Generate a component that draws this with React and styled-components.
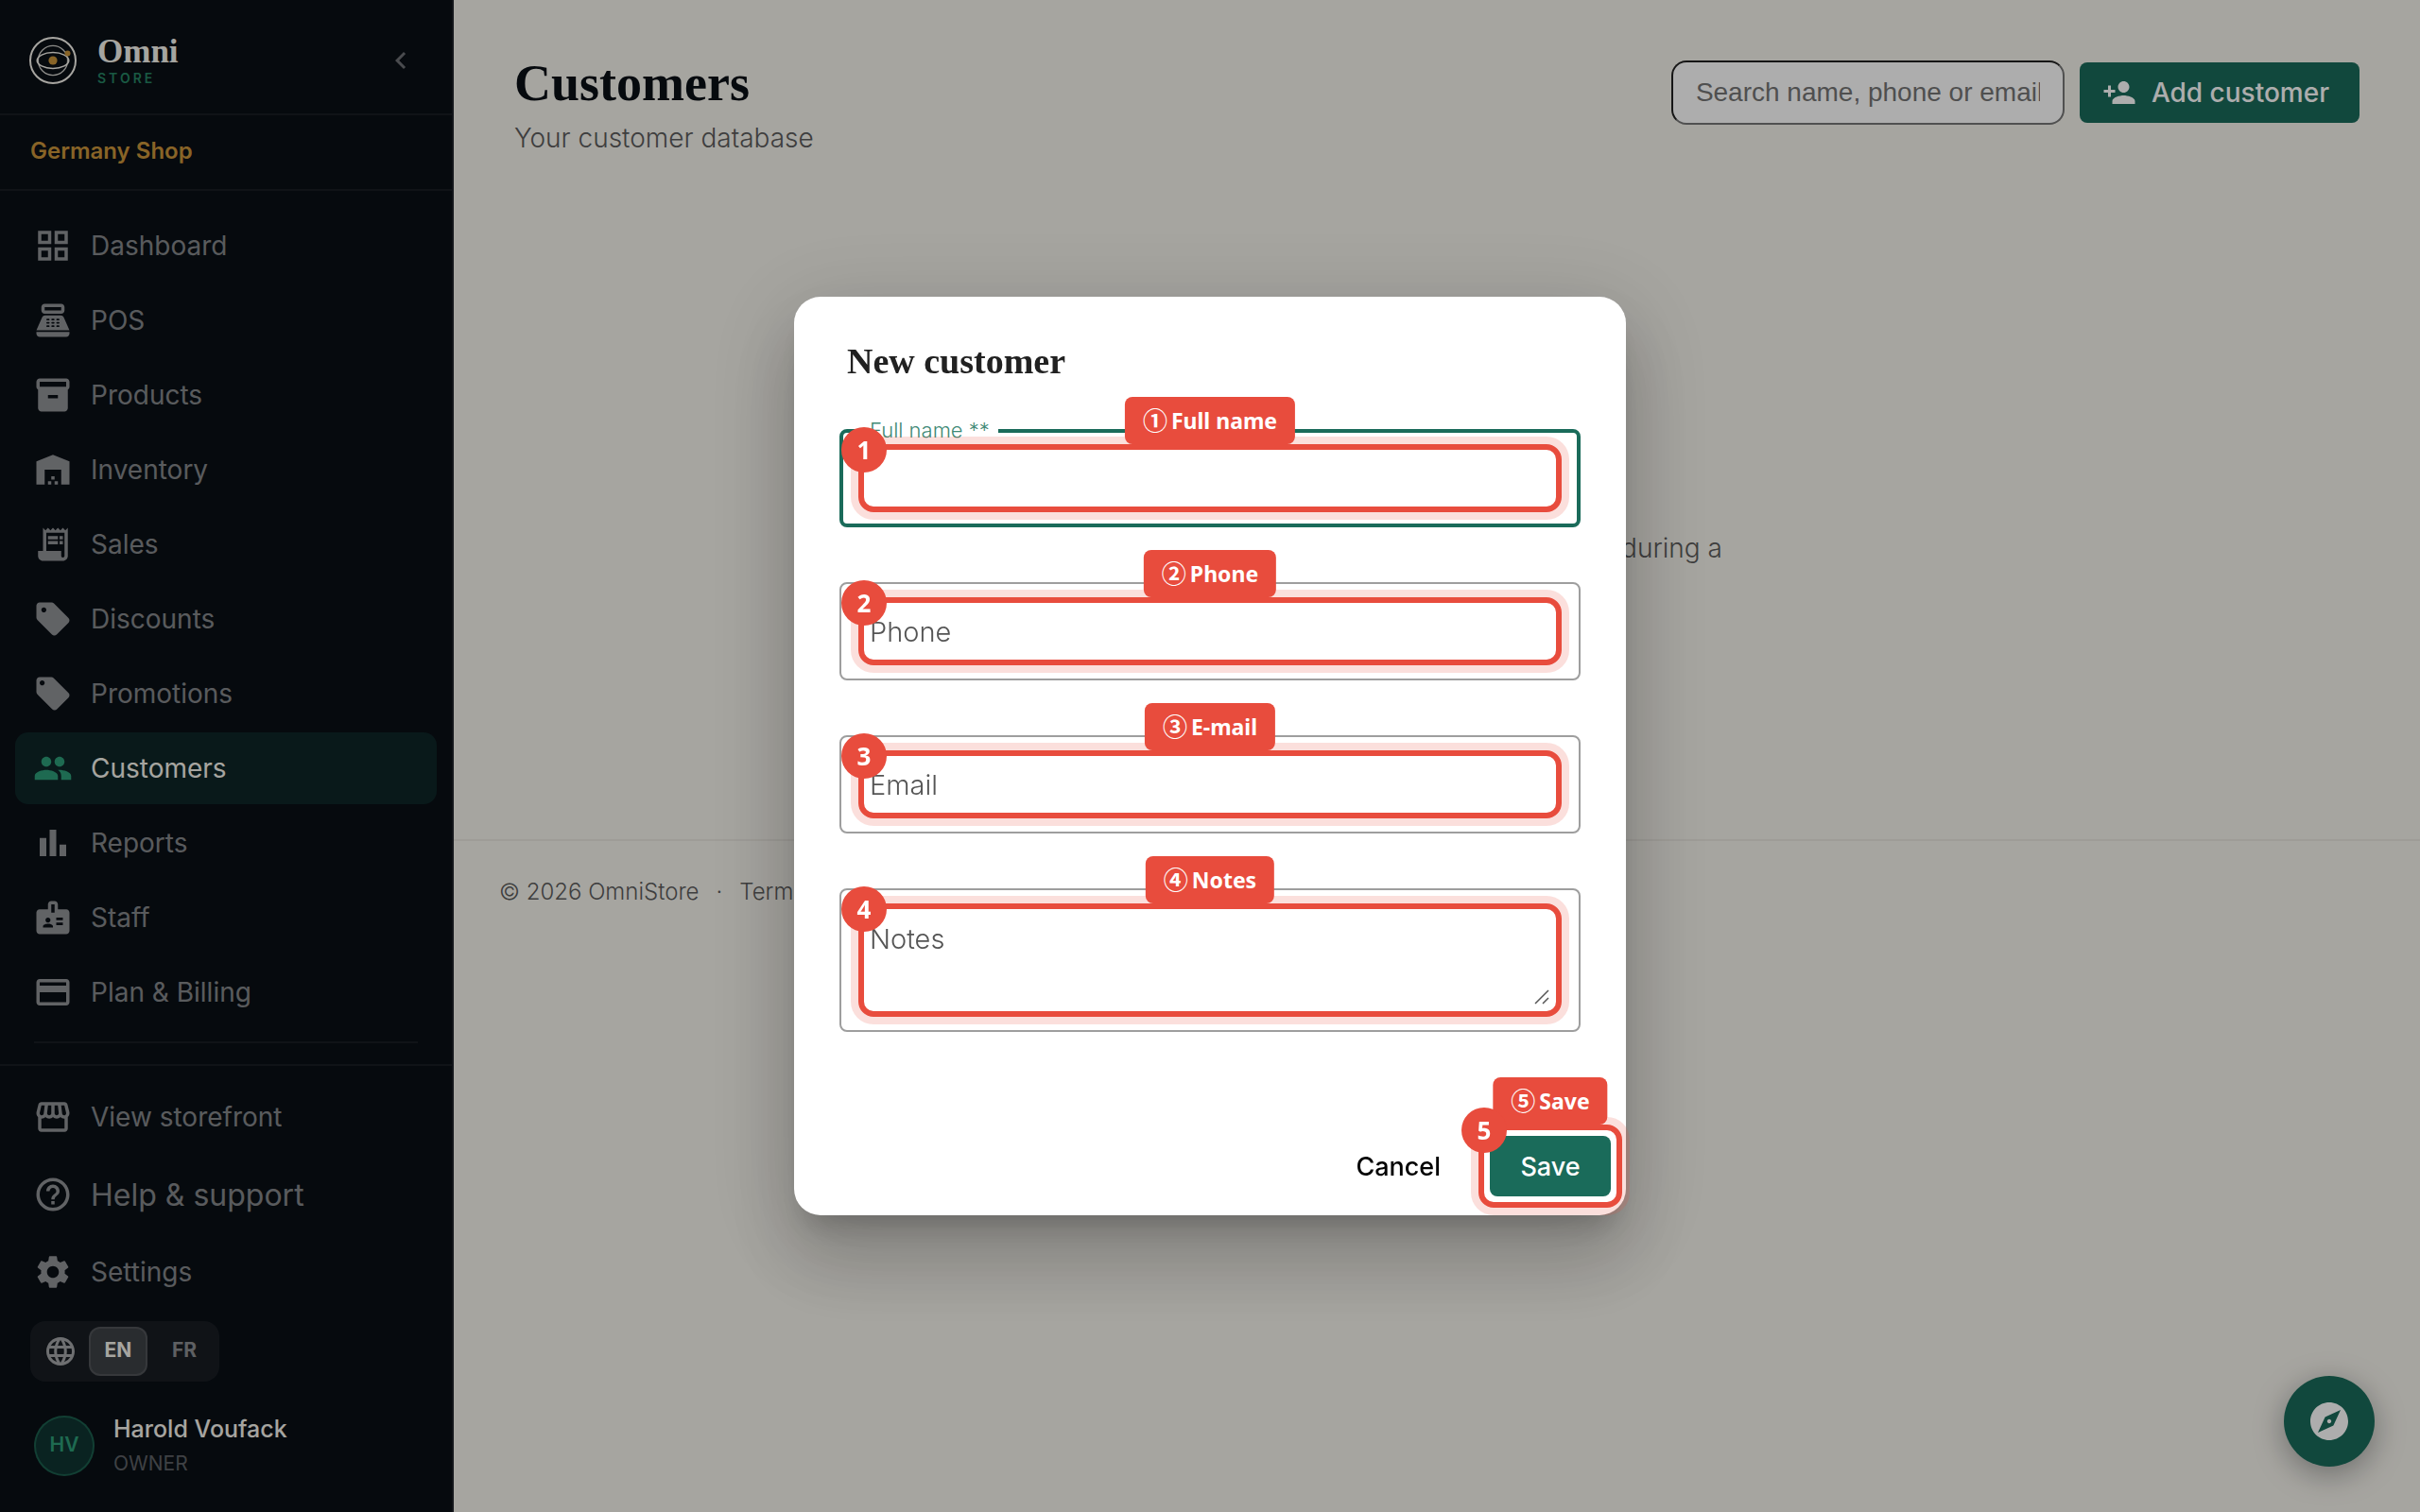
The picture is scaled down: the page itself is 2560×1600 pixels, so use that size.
import React, { useState } from "react";
import styled, { createGlobalStyle, css } from "styled-components";
import {
  MdOutlineGridView,
  MdPointOfSale,
  MdInventory2,
  MdWarehouse,
  MdReceiptLong,
  MdSell,
  MdLocalOffer,
  MdPeople,
  MdBarChart,
  MdBadge,
  MdOutlineCreditCard,
  MdOutlineStorefront,
  MdHelpOutline,
  MdSettings,
  MdLanguage,
  MdChevronLeft,
  MdPersonAdd,
  MdExplore,
} from "react-icons/md";

const sans = `Inter, "Open Sans", sans-serif`;
const serif = `"Liberation Serif", serif`;
const callout = `"Noto Sans", "Open Sans", "Noto Sans CJK JP", sans-serif`;

const color = {
  ink: "#0a0f16",
  ivory: "#f5f3ec",
  green: "#1a6b5a",
  mint: "#2d9d78",
  gold: "#c9943a",
  line: "rgba(255, 255, 255, 0.06)",
  muted: "rgba(255, 255, 255, 0.5)",
  grey: "#5c5c5c",
  red: "#e84c3d",
};

const GlobalStyle = createGlobalStyle`
  *, *::before, *::after { box-sizing: border-box; }
  body { margin: 0; background: ${color.ivory}; font-family: ${sans}; font-size: 28px; }
  button { font: inherit; border: 0; background: none; padding: 0; cursor: pointer; }
  a { color: inherit; text-decoration: none; }
  h1, h2, p { margin: 0; }
  svg { display: block; flex: none; }
`;

const Shell = styled.div`
  display: grid;
  grid-template-columns: 480px 1fr;
  min-height: 100vh;
`;

/* ---------- Sidebar ---------- */

const Sidebar = styled.aside`
  display: flex;
  flex-direction: column;
  height: 100vh;
  background: ${color.ink};
  border-right: 2px solid rgba(255, 255, 255, 0.08);
  color: ${color.muted};
`;

const Brand = styled.header`
  display: flex;
  align-items: center;
  gap: 21px;
  height: 122px;
  padding: 8px 36px 0 30px;
  border-bottom: 2px solid ${color.line};
`;

const BrandText = styled.div`
  flex: 1;
  padding-top: 2px;
`;

const BrandName = styled.div`
  font: 700 35px/36px ${serif};
  color: ${color.ivory};
`;

const BrandSub = styled.div`
  font-size: 14px;
  line-height: 20px;
  font-weight: 600;
  letter-spacing: 3px;
  color: #268464;
`;

const Collapse = styled.button`
  color: rgba(255, 255, 255, 0.4);
`;

const ShopName = styled.div`
  padding: 0 32px;
  font-size: 24px;
  font-weight: 600;
  line-height: 76px;
  height: 80px;
  color: ${color.gold};
  border-bottom: 2px solid ${color.line};
`;

const Nav = styled.nav`
  display: flex;
  flex-direction: column;
  gap: 3px;
  padding: 20px 16px 22px;
  border-bottom: 2px solid ${color.line};
`;

const NavRule = styled.hr`
  width: calc(100% - 40px);
  margin: 11px 20px 0;
  border: 0;
  border-top: 2px solid ${color.line};
`;

const NavItem = styled.a`
  display: flex;
  align-items: center;
  gap: 19px;
  height: 76px;
  padding: 0 19px;
  border-radius: 14px;
  font-size: ${(p) => (p.$large ? 32 : 28)}px;
  svg { color: rgba(255, 255, 255, 0.55); }
  ${(p) =>
    p.$active &&
    css`
      background: rgba(26, 107, 90, 0.25);
      color: ${color.ivory};
      svg { color: ${color.mint}; }
    `}
`;

const SideFooter = styled.div`
  display: flex;
  flex-direction: column;
  gap: 6px;
  padding: 16px 16px 0;
`;

const Languages = styled.div`
  display: flex;
  align-items: center;
  align-self: flex-start;
  gap: 12px;
  height: 64px;
  margin: 8px 16px 0;
  padding: 6px 6px 6px 14px;
  border-radius: 16px;
  background: rgba(255, 255, 255, 0.06);
  color: rgba(255, 255, 255, 0.6);
`;

const LanguageChoice = styled.div`
  display: flex;
  gap: 8px;
`;

const LanguageButton = styled.button`
  width: 62px;
  height: 52px;
  padding-bottom: 4px;
  border-radius: 12px;
  border: 2px solid ${(p) => (p.$on ? "rgba(255, 255, 255, 0.1)" : "transparent")};
  background: ${(p) => (p.$on ? "rgba(255, 255, 255, 0.16)" : "transparent")};
  color: ${(p) => (p.$on ? color.ivory : "rgba(255, 255, 255, 0.5)")};
  font-size: 21px;
  font-weight: 700;
`;

const User = styled.div`
  display: flex;
  align-items: center;
  gap: 20px;
  margin: 25px 20px 0;
`;

const Avatar = styled.div`
  display: grid;
  place-items: center;
  width: 64px;
  height: 64px;
  padding-bottom: 4px;
  border-radius: 50%;
  border: 2px solid rgba(45, 157, 120, 0.4);
  background: rgba(26, 107, 90, 0.4);
  color: ${color.mint};
  font-size: 21px;
  font-weight: 600;
`;

const UserName = styled.div`
  font-size: 25px;
  line-height: 38px;
  font-weight: 500;
  color: ${color.ivory};
`;

const UserRole = styled.div`
  font-size: 21px;
  line-height: 36px;
  color: rgba(255, 255, 255, 0.35);
`;

/* ---------- Main ---------- */

const Main = styled.main`
  display: flex;
  flex-direction: column;
`;

const PageHead = styled.header`
  display: flex;
  align-items: flex-start;
  justify-content: space-between;
  padding: 60px 64px 0;
`;

const Title = styled.h1`
  font: 700 54px/56px ${serif};
  color: ${color.ink};
`;

const Subtitle = styled.p`
  margin-top: 12px;
  line-height: 36px;
  color: ${color.grey};
  font-weight: 300;
`;

const Actions = styled.div`
  display: flex;
  align-items: center;
  gap: 16px;
  margin-top: 4px;
`;

const Search = styled.input`
  width: 416px;
  height: 68px;
  padding: 0 24px;
  border: 2px inset #767676;
  border-radius: 16px;
  background: #fff;
  font: 28px "Liberation Sans", sans-serif;
  &::placeholder { color: #757575; opacity: 1; }
`;

const Primary = styled.button`
  display: flex;
  align-items: center;
  justify-content: center;
  gap: 16px;
  height: 64px;
  min-width: 128px;
  padding: 0 ${(p) => (p.$icon ? 32 : 24)}px 0 24px;
  border-radius: 8px;
  background: ${color.green};
  color: #fff;
  font-size: ${(p) => (p.$icon ? 28 : 27)}px;
  font-weight: 500;
`;

const Empty = styled.section`
  display: flex;
  flex-direction: column;
  align-items: center;
  min-height: 724px;
  padding-top: 394px;
`;

const EmptyText = styled.p`
  max-width: 620px;
  text-align: center;
  line-height: 44px;
  color: ${color.grey};
  font-weight: 300;
`;

const Footer = styled.footer`
  display: flex;
  gap: 18px;
  padding: 36px 48px;
  border-top: 2px solid #e9e6df;
  font-size: 24px;
  line-height: 36px;
  font-weight: 300;
  color: ${color.grey};
`;

const Help = styled.button`
  position: fixed;
  right: 48px;
  bottom: 48px;
  display: grid;
  place-items: center;
  width: 96px;
  height: 96px;
  border-radius: 50%;
  background: ${color.green};
  color: #fff;
  box-shadow: 0 8px 32px rgba(10, 15, 20, 0.35);
`;

/* ---------- Dialog ---------- */

const Scrim = styled.div`
  position: fixed;
  inset: 0;
  display: grid;
  place-items: center;
  background: rgba(0, 0, 0, 0.32);
`;

const Dialog = styled.form`
  width: 880px;
  padding: 46px 16px 20px 48px;
  border-radius: 28px;
  background: #fff;
  box-shadow:
    0 22px 30px -14px rgba(0, 0, 0, 0.2),
    0 48px 76px 6px rgba(0, 0, 0, 0.14),
    0 18px 92px 16px rgba(0, 0, 0, 0.12);
`;

const DialogTitle = styled.h2`
  padding-left: 8px;
  font: 700 38px/44px ${serif};
  color: #212121;
`;

const Fields = styled.div`
  display: flex;
  flex-direction: column;
  gap: 58px;
  margin: 50px 32px 0 0;
`;

const Outline = styled.div`
  position: relative;
  padding: ${(p) => (p.$focused ? 24 : 26)}px ${(p) => (p.$focused ? 28 : 30)}px;
  border: ${(p) => (p.$focused ? `4px solid ${color.green}` : "2px solid #9e9e9e")};
  border-radius: 8px;
`;

const FloatingLabel = styled.label`
  position: absolute;
  top: -17px;
  left: 20px;
  padding: 0 9px 0 8px;
  background: #fff;
  color: #3f8a76;
  font-size: 22px;
  line-height: 28px;
  font-weight: 300;
`;

const HiddenLabel = styled.label`
  position: absolute;
  width: 1px;
  height: 1px;
  overflow: hidden;
  clip-path: inset(50%);
`;

const control = css`
  display: block;
  width: 100%;
  padding: 2px 0 0;
  border: 0;
  outline: 0;
  background: none;
  font: 300 29px/48px ${sans};
  color: #212121;
  &::placeholder { color: #555; opacity: 1; }
`;

const TextInput = styled.input`
  ${control}
  height: 48px;
`;

const TextArea = styled.textarea`
  ${control}
  height: 96px;
  resize: none;
`;

const Grip = styled.svg`
  position: absolute;
  right: 0;
  bottom: 0;
`;

const DialogActions = styled.div`
  display: flex;
  justify-content: flex-end;
  gap: 24px;
  margin-top: 110px;
`;

const Cancel = styled.button`
  height: 64px;
  padding: 0 28px;
  font-size: 27px;
  font-weight: 500;
  color: #000;
`;

/* ---------- Numbered callouts ---------- */

const Target = styled.div`
  position: relative;
`;

const Ring = styled.div`
  position: absolute;
  inset: -12px;
  border: 6px solid ${color.red};
  border-radius: 16px;
  box-shadow: 0 0 0 8px rgba(232, 76, 61, 0.18);
  pointer-events: none;
`;

const Step = styled.span`
  position: absolute;
  top: -24px;
  left: -24px;
  display: grid;
  place-items: center;
  width: 48px;
  height: 48px;
  border-radius: 50%;
  background: ${color.red};
  color: #fff;
  font: 700 26px/48px ${callout};
`;

const Tag = styled.span`
  position: absolute;
  bottom: 100%;
  left: 50%;
  transform: translateX(-50%);
  display: flex;
  align-items: center;
  gap: 4px;
  height: 50px;
  margin-bottom: 6px;
  padding: 0 19px;
  border-radius: 8px;
  background: ${color.red};
  color: #fff;
  font: 700 23px/50px ${callout};
  white-space: nowrap;
`;

const Sign = styled.span`
  font-size: 26px;
`;

const Logo = () => (
  <svg width="52" height="52" viewBox="0 0 52 52" fill="none" stroke={color.ivory} aria-hidden="true">
    <circle cx="26" cy="26" r="24" strokeWidth="2" />
    <circle cx="26" cy="26" r="15.6" strokeWidth="1.3" opacity="0.85" />
    <ellipse cx="26" cy="26" rx="16.8" ry="8.4" strokeWidth="1.5" />
    <circle cx="26" cy="26" r="4.6" fill={color.gold} stroke="none" />
    <circle cx="41.5" cy="18.5" r="3" fill={color.gold} stroke="none" />
  </svg>
);

const Callout = ({ n, sign, text, children }) => (
  <Target>
    {children}
    <Ring>
      <Tag>
        <Sign>{sign}</Sign>
        {text}
      </Tag>
      <Step>{n}</Step>
    </Ring>
  </Target>
);

const mainLinks = [
  ["Dashboard", MdOutlineGridView],
  ["POS", MdPointOfSale],
  ["Products", MdInventory2],
  ["Inventory", MdWarehouse],
  ["Sales", MdReceiptLong],
  ["Discounts", MdSell],
  ["Promotions", MdLocalOffer],
  ["Customers", MdPeople],
  ["Reports", MdBarChart],
  ["Staff", MdBadge],
  ["Plan & Billing", MdOutlineCreditCard],
];

const footLinks = [
  ["View storefront", MdOutlineStorefront],
  ["Help & support", MdHelpOutline, true],
  ["Settings", MdSettings],
];

export default function App() {
  const [language, setLanguage] = useState("EN");
  return (
    <>
      <GlobalStyle />
      <Shell>
        <Sidebar>
          <Brand>
            <Logo />
            <BrandText>
              <BrandName>Omni</BrandName>
              <BrandSub>STORE</BrandSub>
            </BrandText>
            <Collapse type="button" aria-label="Collapse sidebar">
              <MdChevronLeft size={36} />
            </Collapse>
          </Brand>
          <ShopName>Germany Shop</ShopName>
          <Nav>
            {mainLinks.map(([name, Icon]) => (
              <NavItem key={name} href="#" $active={name === "Customers"}>
                <Icon size={42} />
                {name}
              </NavItem>
            ))}
            <NavRule />
          </Nav>
          <SideFooter>
            {footLinks.map(([name, Icon, large]) => (
              <NavItem key={name} href="#" $large={large}>
                <Icon size={42} />
                {name}
              </NavItem>
            ))}
            <Languages>
              <MdLanguage size={36} />
              <LanguageChoice>
                {["EN", "FR"].map((code) => (
                  <LanguageButton
                    key={code}
                    type="button"
                    $on={language === code}
                    onClick={() => setLanguage(code)}
                  >
                    {code}
                  </LanguageButton>
                ))}
              </LanguageChoice>
            </Languages>
            <User>
              <Avatar>HV</Avatar>
              <div>
                <UserName>Harold Voufack</UserName>
                <UserRole>OWNER</UserRole>
              </div>
            </User>
          </SideFooter>
        </Sidebar>

        <Main>
          <PageHead>
            <div>
              <Title>Customers</Title>
              <Subtitle>Your customer database</Subtitle>
            </div>
            <Actions>
              <Search
                type="text"
                aria-label="Search customers"
                placeholder="Search name, phone or email"
              />
              <Primary type="button" $icon>
                <MdPersonAdd size={36} />
                Add customer
              </Primary>
            </Actions>
          </PageHead>
          <Empty>
            <EmptyText>Add a first customer here or save one during a sale.</EmptyText>
          </Empty>
          <Footer>
            <span>© 2026 OmniStore</span>
            <span>·</span>
            <a href="#">Terms</a>
          </Footer>
        </Main>
      </Shell>
      <Help type="button" aria-label="Open guide">
        <MdExplore size={48} />
      </Help>

      <Scrim>
        <Dialog role="dialog" aria-labelledby="dialog-title" onSubmit={(e) => e.preventDefault()}>
          <DialogTitle id="dialog-title">New customer</DialogTitle>
          <Fields>
            <Outline $focused>
              <FloatingLabel htmlFor="name">Full name **</FloatingLabel>
              <Callout n="1" sign="①" text="Full name">
                <TextInput id="name" required />
              </Callout>
            </Outline>
            <Outline>
              <HiddenLabel htmlFor="phone">Phone</HiddenLabel>
              <Callout n="2" sign="②" text="Phone">
                <TextInput id="phone" type="tel" placeholder="Phone" />
              </Callout>
            </Outline>
            <Outline>
              <HiddenLabel htmlFor="email">Email</HiddenLabel>
              <Callout n="3" sign="③" text="E-mail">
                <TextInput id="email" type="email" placeholder="Email" />
              </Callout>
            </Outline>
            <Outline>
              <HiddenLabel htmlFor="notes">Notes</HiddenLabel>
              <Callout n="4" sign="④" text="Notes">
                <TextArea id="notes" placeholder="Notes" />
                <Grip width="18" height="18" viewBox="0 0 18 18" stroke="#555" strokeWidth="1.5" aria-hidden="true">
                  <path d="M2 16 16 2M10 16l6-6" />
                </Grip>
              </Callout>
            </Outline>
          </Fields>
          <DialogActions>
            <Cancel type="button">Cancel</Cancel>
            <Callout n="5" sign="⑤" text="Save">
              <Primary type="submit">Save</Primary>
            </Callout>
          </DialogActions>
        </Dialog>
      </Scrim>
    </>
  );
}
